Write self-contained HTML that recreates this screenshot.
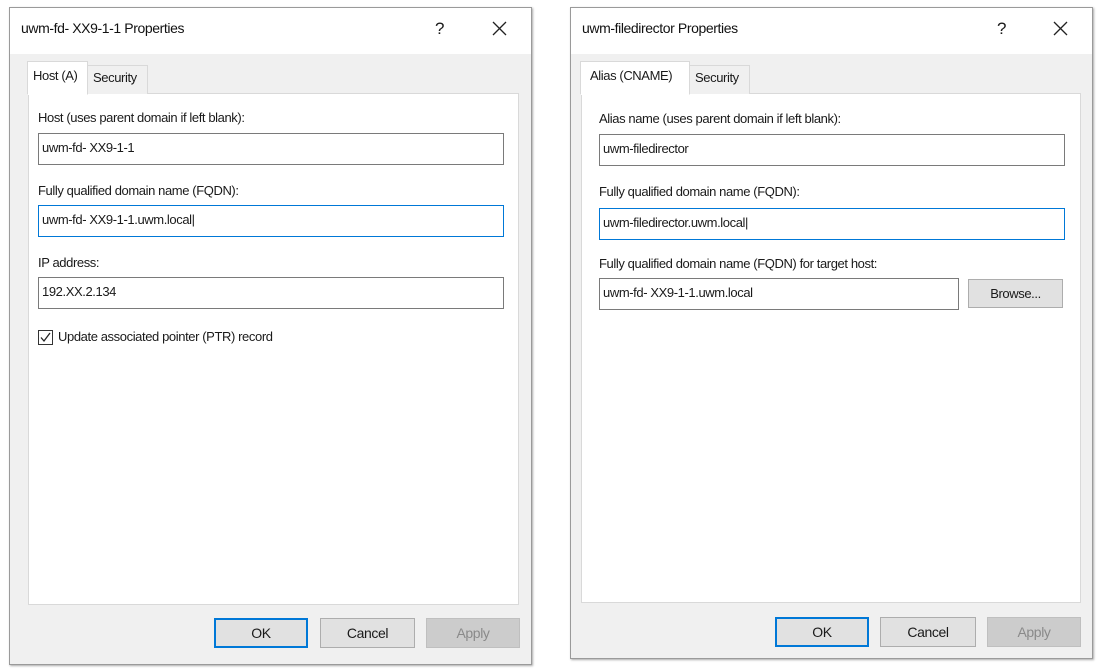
<!DOCTYPE html>
<html><head><style>
*{box-sizing:border-box;margin:0;padding:0}
body{width:1100px;height:670px;background:#fff;position:relative;overflow:hidden;font-family:"Liberation Sans",sans-serif;font-size:13px;color:#1a1a1a;letter-spacing:-0.4px}
.a{position:absolute}
.dlg{background:#f0f0f0;border:1px solid #9a9a9a;box-shadow:1px 1px 2px #aaa}
.title{background:#fff;height:45px}
.tt{font-size:14px;color:#111}
.panel{background:#fff;border:1px solid #d9d9d9}
.tab{background:#fff;border:1px solid #d9d9d9;border-bottom:none;padding:6px 5px;font-size:13px}
.tab2{background:#f0f0f0;border:1px solid #d9d9d9;border-bottom:none;padding:4px 5px;font-size:13px}
.inp{background:#fff;border:1px solid #7a7a7a;padding:6px 3px;font-size:13px;height:32px}
.foc{border:1px solid #0078d7}
.btn{background:#e1e1e1;border:1px solid #adadad;text-align:center;font-size:14px;line-height:28px}
.ok{border:2px solid #0078d7;line-height:26px}
.dis{background:#ccc;border-color:#bfbfbf;color:#8a8a8a}
.q{font-size:17px}
</style></head><body>

<!-- Left dialog -->
<div class="a dlg" style="left:9px;top:7px;width:523px;height:658px"></div>
<div class="a title" style="left:10px;top:8px;width:521px;height:46px"></div>
<div class="a tt" style="left:21px;top:20px">uwm-fd- XX9-1-1 Properties</div>
<div class="a q" style="left:435px;top:19px">?</div>
<svg class="a" style="left:492px;top:21px" width="15" height="15"><path d="M1 1 L14 14 M14 1 L1 14" stroke="#222" stroke-width="1.3"/></svg>
<div class="a panel" style="left:28px;top:93px;width:491px;height:512px"></div>
<div class="a tab2" style="left:87px;top:65px;width:61px;height:29px">Security</div>
<div class="a tab" style="left:27px;top:61px;width:61px;height:34px;border-bottom:1px solid #fff">Host (A)</div>
<div class="a" style="left:38px;top:110px">Host (uses parent domain if left blank):</div>
<div class="a inp" style="left:38px;top:133px;width:466px">uwm-fd- XX9-1-1</div>
<div class="a" style="left:38px;top:183px">Fully qualified domain name (FQDN):</div>
<div class="a inp foc" style="left:38px;top:205px;width:466px">uwm-fd- XX9-1-1.uwm.local|</div>
<div class="a" style="left:38px;top:255px">IP address:</div>
<div class="a inp" style="left:38px;top:277px;width:466px">192.XX.2.134</div>
<div class="a" style="left:38px;top:330px;width:15px;height:15px;border:1px solid #333;background:#fff"></div>
<svg class="a" style="left:38px;top:330px" width="15" height="15"><path d="M3 7.5 L6 11 L12 3" stroke="#222" stroke-width="1.3" fill="none"/></svg>
<div class="a" style="left:58px;top:329px">Update associated pointer (PTR) record</div>
<div class="a btn ok" style="left:214px;top:618px;width:94px;height:30px">OK</div>
<div class="a btn" style="left:320px;top:618px;width:95px;height:30px">Cancel</div>
<div class="a btn dis" style="left:426px;top:618px;width:94px;height:30px">Apply</div>

<!-- Right dialog -->
<div class="a dlg" style="left:570px;top:7px;width:523px;height:652px"></div>
<div class="a title" style="left:571px;top:8px;width:521px;height:46px"></div>
<div class="a tt" style="left:582px;top:20px">uwm-filedirector Properties</div>
<div class="a q" style="left:997px;top:19px">?</div>
<svg class="a" style="left:1053px;top:21px" width="15" height="15"><path d="M1 1 L14 14 M14 1 L1 14" stroke="#222" stroke-width="1.3"/></svg>
<div class="a panel" style="left:581px;top:93px;width:500px;height:510px"></div>
<div class="a tab2" style="left:689px;top:65px;width:61px;height:29px">Security</div>
<div class="a tab" style="left:580px;top:61px;width:110px;height:34px;border-bottom:1px solid #fff;padding-left:9px">Alias (CNAME)</div>
<div class="a" style="left:599px;top:111px">Alias name (uses parent domain if left blank):</div>
<div class="a inp" style="left:599px;top:134px;width:466px">uwm-filedirector</div>
<div class="a" style="left:599px;top:184px">Fully qualified domain name (FQDN):</div>
<div class="a inp foc" style="left:599px;top:208px;width:466px">uwm-filedirector.uwm.local|</div>
<div class="a" style="left:599px;top:256px">Fully qualified domain name (FQDN) for target host:</div>
<div class="a inp" style="left:599px;top:278px;width:360px">uwm-fd- XX9-1-1.uwm.local</div>
<div class="a btn" style="left:968px;top:279px;width:95px;height:29px;font-size:13px">Browse...</div>
<div class="a btn ok" style="left:775px;top:617px;width:94px;height:30px">OK</div>
<div class="a btn" style="left:880px;top:617px;width:96px;height:30px">Cancel</div>
<div class="a btn dis" style="left:987px;top:617px;width:94px;height:30px">Apply</div>
</body></html>
